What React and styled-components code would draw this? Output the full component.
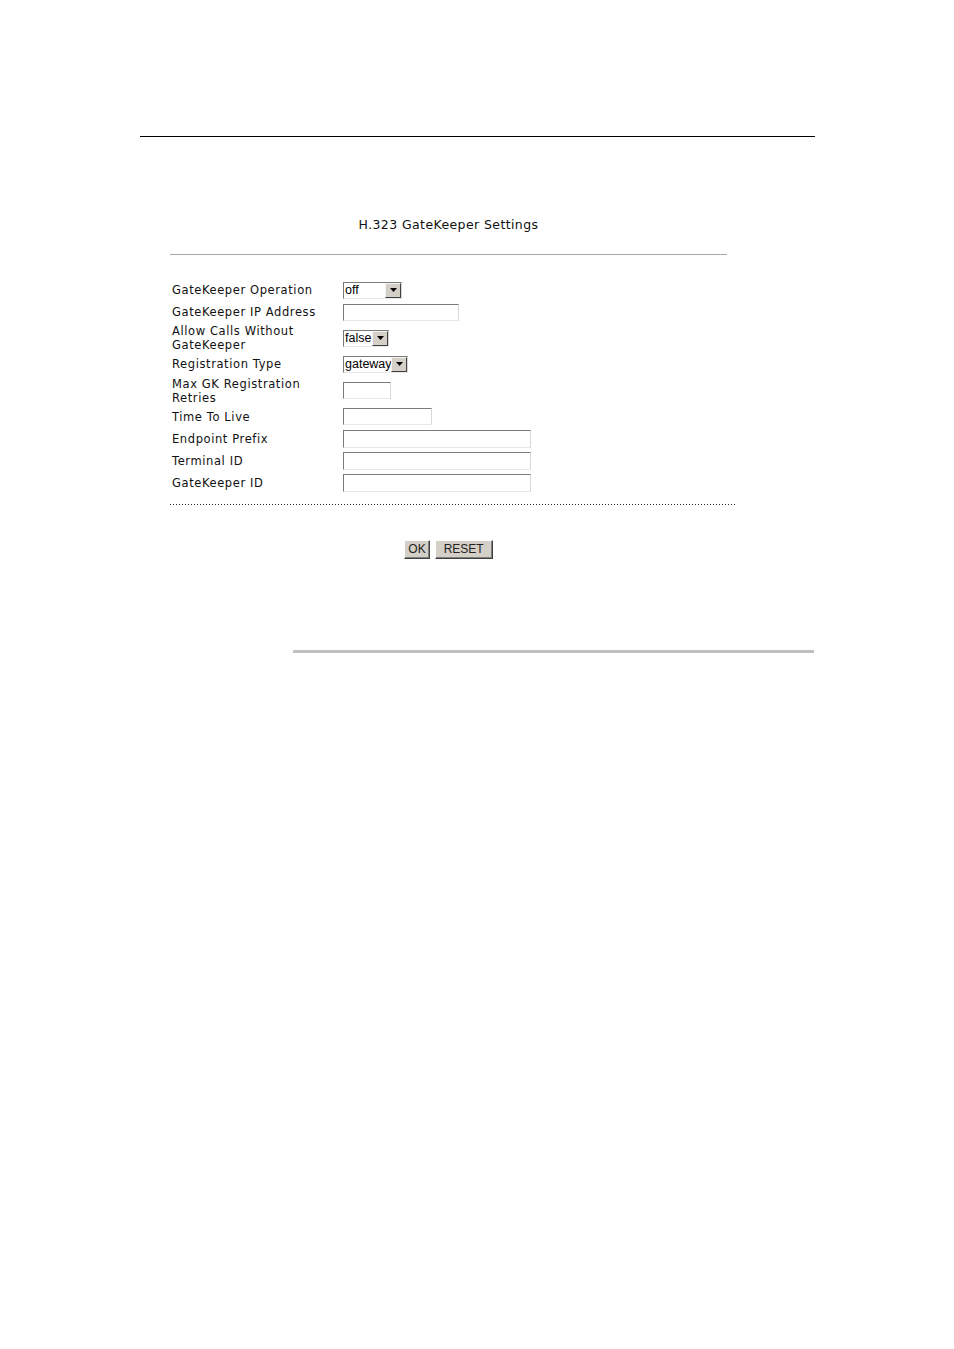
import React from "react";
import styled, { createGlobalStyle } from "styled-components";

const Global = createGlobalStyle`
  html, body { margin: 0; padding: 0; background: #fff; }
  body { font-family: "DejaVu Sans", Verdana, sans-serif; color: #000; }
`;

const Page = styled.div`
  width: 954px;
  min-height: 1349px;
  padding-top: 136px;
  box-sizing: border-box;
`;

const TopRule = styled.div`
  margin-left: 140px;
  width: 675px;
  height: 1px;
  background: #000;
`;

const Panel = styled.div`
  margin-left: 170px;
  margin-top: 79px;
  width: 565px;
`;

const Title = styled.h1`
  width: 557px;
  margin: 0;
  text-align: center;
  font-family: "DejaVu Sans", Verdana, sans-serif;
  font-weight: normal;
  font-size: 12.5px;
  letter-spacing: 0.4px;
  line-height: 18px;
  color: #111;
`;

const GrayRule = styled.div`
  width: 557px;
  height: 1px;
  background: #a8a8a8;
  margin-top: 20px;
`;

const Form = styled.div`
  margin-top: 24px;
  display: grid;
  grid-template-columns: 171px 1fr;
  padding-left: 2px;
`;

const Row = styled.div`
  display: contents;
`;

const Label = styled.div`
  height: ${(p) => (p.$tall ? 30 : 22.2)}px;
  display: flex;
  align-items: center;
  font-size: 11.5px;
  line-height: 14px;
  letter-spacing: 0.6px;
  color: #111;
`;

const Cell = styled.div`
  display: flex;
  align-items: center;
  height: ${(p) => (p.$tall ? 30 : 22.2)}px;
`;

const TextInput = styled.input`
  box-sizing: border-box;
  width: ${(p) => p.$w}px;
  height: ${(p) => p.$h || 17}px;
  margin: 0;
  padding: 0 2px;
  border-style: solid;
  border-width: 1px;
  border-color: #7a7a7a #d8d8d8 #e8e8e8 #7a7a7a;
  background: #fff;
  font-family: "Liberation Sans", Arial, sans-serif;
  font-size: 12px;
  outline: none;
`;

const SelectBox = styled.span`
  display: inline-flex;
  align-items: stretch;
  box-sizing: border-box;
  width: ${(p) => p.$w}px;
  height: 17px;
  border-style: solid;
  border-width: 1px;
  border-color: #7a7a7a #d8d8d8 #e8e8e8 #7a7a7a;
  background: #fff;
`;

const NativeSelect = styled.select`
  flex: 1;
  min-width: 0;
  appearance: none;
  -webkit-appearance: none;
  border: none;
  background: transparent;
  margin: 0;
  padding: 0 0 0 1px;
  font-family: "Liberation Sans", Arial, sans-serif;
  font-size: 12.5px;
  line-height: 15px;
  color: #000;
  outline: none;
`;

const Arrow = styled.span`
  width: 16px;
  box-sizing: border-box;
  margin: 0;
  background: #d4d0c8;
  border-style: solid;
  border-width: 1px;
  border-color: #f4f4f4 #404040 #404040 #f4f4f4;
  display: flex;
  align-items: center;
  justify-content: center;
`;

const DottedRule = styled.div`
  width: 565px;
  height: 1px;
  margin-top: 10px;
  background: repeating-linear-gradient(
    to right,
    #222 0,
    #222 1px,
    transparent 1px,
    transparent 3px
  );
`;

const Buttons = styled.div`
  width: 557px;
  margin-top: 35px;
  display: flex;
  justify-content: center;
  gap: 5px;
`;

const Button = styled.button`
  box-sizing: border-box;
  height: 19px;
  padding: 0 ${(p) => p.$pad}px;
  margin: 0;
  background: #d4d0c8;
  border-style: solid;
  border-width: 1px;
  border-color: #fff #404040 #404040 #fff;
  box-shadow: inset -1px -1px 0 #808080;
  font-family: "Liberation Sans", Arial, sans-serif;
  font-size: 12px;
  line-height: 15px;
  color: #222;
`;

const BottomRule = styled.div`
  margin-left: 293px;
  margin-top: 91px;
  width: 521px;
  height: 3px;
  background: #c0c0c0;
`;

function Select({ w, value, options }) {
  return (
    <SelectBox $w={w}>
      <NativeSelect defaultValue={value}>
        {options.map((o) => (
          <option key={o} value={o}>
            {o}
          </option>
        ))}
      </NativeSelect>
      <Arrow>
        <svg width="7" height="4" viewBox="0 0 7 4">
          <path d="M0 0h7L3.5 4z" fill="#000" />
        </svg>
      </Arrow>
    </SelectBox>
  );
}

const rows = [
  { label: "GateKeeper Operation", control: <Select w={59} value="off" options={["off", "on"]} /> },
  { label: "GateKeeper IP Address", control: <TextInput $w={116} /> },
  {
    label: (
      <>
        Allow Calls Without
        <br />
        GateKeeper
      </>
    ),
    tall: true,
    control: <Select w={46} value="false" options={["false", "true"]} />,
  },
  { label: "Registration Type", control: <Select w={65} value="gateway" options={["gateway", "terminal"]} /> },
  {
    label: (
      <>
        Max GK Registration
        <br />
        Retries
      </>
    ),
    tall: true,
    control: <TextInput $w={48} />,
  },
  { label: "Time To Live", control: <TextInput $w={89} /> },
  { label: "Endpoint Prefix", control: <TextInput $w={188} $h={18} /> },
  { label: "Terminal ID", control: <TextInput $w={188} $h={18} /> },
  { label: "GateKeeper ID", control: <TextInput $w={188} $h={18} /> },
];

export default function App() {
  return (
    <>
      <Global />
      <Page>
        <TopRule />
        <Panel>
          <Title>H.323 GateKeeper Settings</Title>
          <GrayRule />
          <Form>
            {rows.map((r, i) => (
              <Row key={i}>
                <Label $tall={r.tall}>
                  <span>{r.label}</span>
                </Label>
                <Cell $tall={r.tall}>{r.control}</Cell>
              </Row>
            ))}
          </Form>
          <DottedRule />
          <Buttons>
            <Button $pad={3}>OK</Button>
            <Button $pad={8}>RESET</Button>
          </Buttons>
        </Panel>
        <BottomRule />
      </Page>
    </>
  );
}
